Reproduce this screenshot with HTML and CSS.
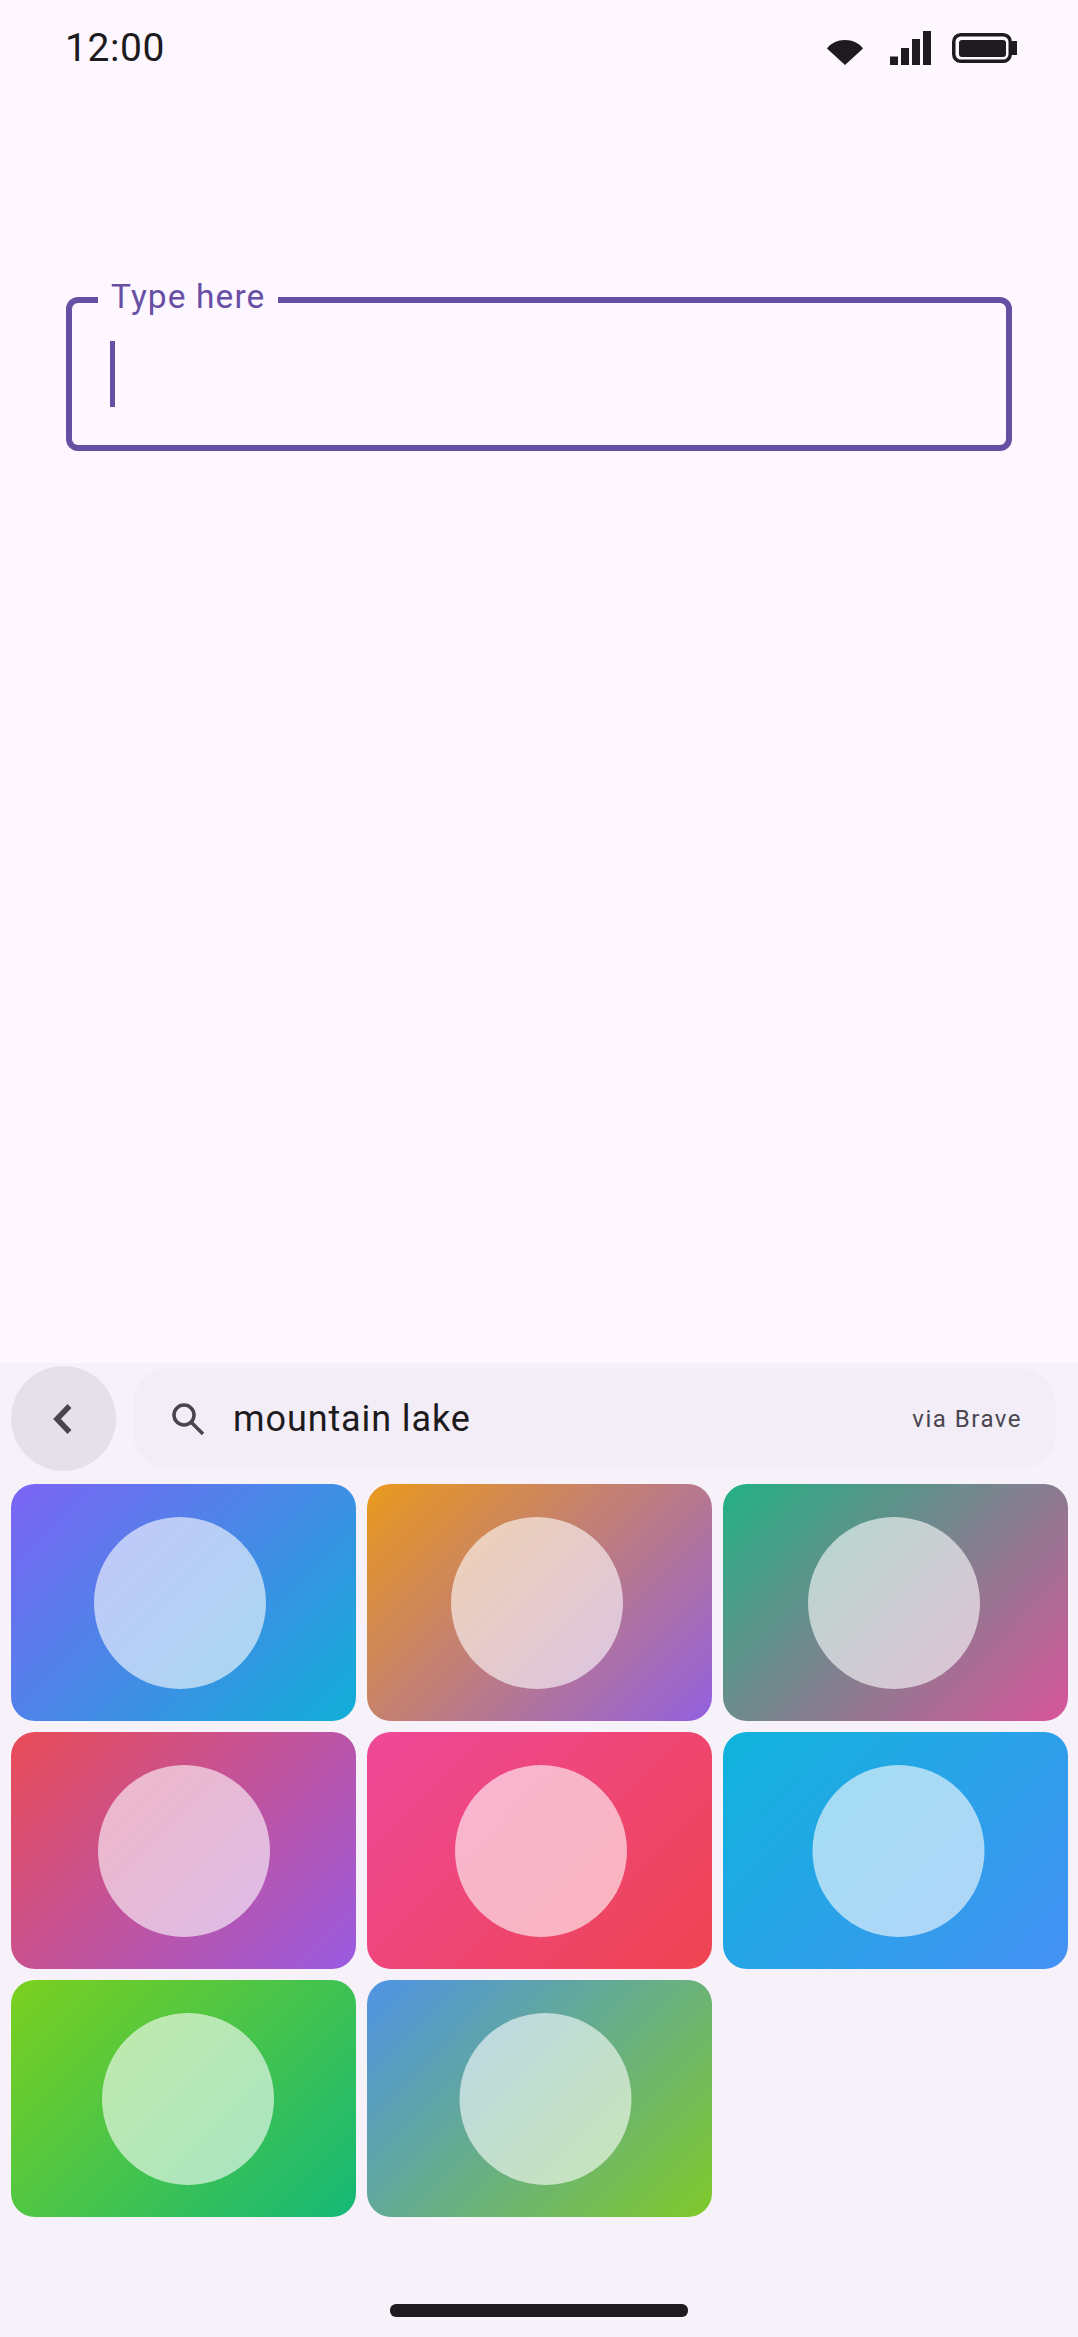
FILE: index.html
```html
<!DOCTYPE html>
<html lang="en">
<head>
  <meta charset="UTF-8">
  <meta name="viewport" content="width=device-width, initial-scale=1.0">
  <title>Type here</title>
  <link rel="stylesheet" href="styles.css">
</head>
<body>
  <div class="screen">
    <div class="status-bar">
      <span class="time">12:00</span>
      <div class="status-icons">
        <svg class="icon-wifi" width="36" height="26" viewBox="0 0 36 26"><path d="M0 9.500C4 4 10.500 1 18 1s14 3 18 8.500L18 26z" fill="#1d1b20"/></svg>
        <svg class="icon-signal" width="41" height="34" viewBox="0 0 41 34"><path d="M0 25.500h8V34H0zM11 17h8v17h-8zM22 8h8v26h-8zM33 0h8v34h-8z" fill="#1d1b20"/></svg>
        <svg class="icon-battery" width="65" height="32" viewBox="0 0 65 32"><rect x="1.750" y="2.750" width="56.500" height="26.500" rx="7" fill="none" stroke="#1d1b20" stroke-width="3.500"/><rect x="7" y="8" width="47" height="17" rx="3" fill="#1d1b20"/><path d="M60 9h5v14h-5z" fill="#1d1b20"/></svg>
      </div>
    </div>

    <div class="content">
      <div class="field">
        <span class="field-label">Type here</span>
        <span class="caret"></span>
      </div>
    </div>

    <div class="gif-panel">
      <div class="search-row">
        <button class="back-btn">
          <svg width="28" height="34" viewBox="0 0 28 34"><path d="M20.500 4 8 17l12.500 13" fill="none" stroke="#49454f" stroke-width="5.500"/></svg>
        </button>
        <div class="search-box">
          <svg class="search-icon" width="36" height="36" viewBox="0 0 36 36"><circle cx="14" cy="14" r="10" fill="none" stroke="#49454f" stroke-width="3.500"/><path d="M21 21l12 12" stroke="#49454f" stroke-width="3.500"/></svg>
          <span class="query">mountain lake</span>
          <span class="via">via Brave</span>
        </div>
      </div>

      <div class="grid">
        <div class="tile t1"><div class="disc"></div></div>
        <div class="tile t2"><div class="disc"></div></div>
        <div class="tile t3"><div class="disc"></div></div>
        <div class="tile t4"><div class="disc"></div></div>
        <div class="tile t5"><div class="disc"></div></div>
        <div class="tile t6"><div class="disc"></div></div>
        <div class="tile t7"><div class="disc"></div></div>
        <div class="tile t8"><div class="disc"></div></div>
      </div>

      <div class="home-bar"></div>
    </div>
  </div>
</body>
</html>
```

FILE: styles.css
```css
body {
  margin: 0;
  font-family: Roboto, sans-serif;
  background: #fef7ff;
  color: #1d1b20;
}

.screen {
  height: 2337px;
  display: flex;
  flex-direction: column;
  overflow: hidden;
}

.status-bar {
  height: 96px;
  padding: 0 61px 0 65px;
  display: flex;
  align-items: center;
  justify-content: space-between;
}

.time {
  font-size: 39px;
  letter-spacing: 0.600px;
}

.status-icons {
  display: flex;
  align-items: center;
  gap: 21px;
}

.icon-wifi {
  margin: 7px 6px 0 0;
}

.content {
  flex: 1;
  padding: 201px 66px 0;
}

.field {
  position: relative;
  height: 154px;
  box-sizing: border-box;
  border: 6px solid #6750a4;
  border-radius: 12px;
  padding: 38px;
}

.field-label {
  position: absolute;
  left: 26px;
  top: -28px;
  padding: 0 13px;
  background: #fef7ff;
  color: #6750a4;
  font-size: 33.500px;
  line-height: 44px;
  letter-spacing: 1.100px;
}

.caret {
  display: block;
  width: 5px;
  height: 66px;
  background: #6750a4;
}

.gif-panel {
  height: 974px;
  background: #f7f2fa;
  padding: 3px 11px 0;
  box-sizing: border-box;
}

.search-row {
  display: flex;
  align-items: center;
  gap: 17px;
  margin-bottom: 13px;
}

.back-btn {
  width: 105px;
  height: 105px;
  border: none;
  padding: 0 2px 0 0;
  border-radius: 50%;
  background: #e6e0e9;
  display: flex;
  align-items: center;
  justify-content: center;
}

.search-box {
  width: 923px;
  height: 101px;
  box-sizing: border-box;
  border-radius: 36px;
  background: #f3edf7;
  padding: 0 34px 0 37px;
  display: flex;
  align-items: center;
}

.search-icon {
  flex: none;
}

.query {
  flex: 1;
  margin-left: 27px;
  font-size: 36px;
  letter-spacing: 0.900px;
}

.via {
  font-size: 24px;
  letter-spacing: 1.500px;
  color: #49454f;
}

.grid {
  display: grid;
  grid-template-columns: repeat(3, 345px);
  grid-auto-rows: 237px;
  gap: 11px;
}

.tile {
  border-radius: 24px;
  display: flex;
  align-items: center;
  justify-content: center;
}

.disc {
  width: 172px;
  height: 172px;
  border-radius: 50%;
  background: rgba(255, 255, 255, 0.6);
  transform: translateX(var(--dx));
}

.t1 { --dx: -4px; background: linear-gradient(135deg, #7d64f5, #10aed8); }
.t2 { --dx: -3px; background: linear-gradient(135deg, #ea991c, #9360e0); }
.t3 { --dx: -2px; background: linear-gradient(135deg, #22b183, #d8549a); }
.t4 { --dx: 0px; background: linear-gradient(135deg, #e94b56, #9a5be2); }
.t5 { --dx: 1px; background: linear-gradient(135deg, #ee4899, #ef4450); }
.t6 { --dx: 2.500px; background: linear-gradient(135deg, #0fb4dc, #4490f4); }
.t7 { --dx: 4px; background: linear-gradient(135deg, #7bd01e, #14b877); }
.t8 { --dx: 5.500px; background: linear-gradient(135deg, #4f93e6, #7fc92a); }

.home-bar {
  width: 298px;
  height: 13px;
  margin: 87px auto 0;
  border-radius: 6px;
  background: #1d1b20;
}
```
